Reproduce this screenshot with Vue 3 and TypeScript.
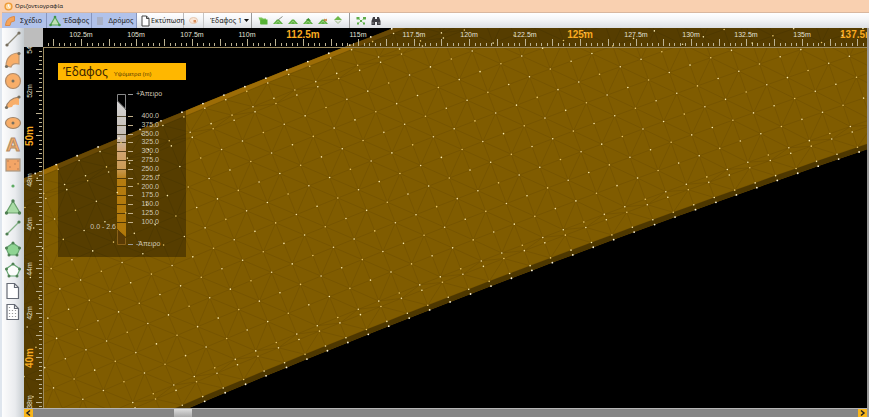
<script setup lang="ts">
import { computed, onBeforeUnmount, onMounted, ref } from 'vue'

interface Point { x: number; y: number }
interface Label { at: number; text: string; big: boolean }

const host = ref<HTMLElement | null>(null)
const width = ref(843)
const height = ref(389)
const RULER = 19
let observer: ResizeObserver | null = null

onMounted(() => {
  const measure = () => {
    if (!host.value) return
    width.value = host.value.clientWidth
    height.value = host.value.clientHeight
  }
  measure()
  observer = new ResizeObserver(measure)
  if (host.value) observer.observe(host.value)
})
onBeforeUnmount(() => observer?.disconnect())

/* Road corridor: stations along the lower edge, cross-section rows on the normal */
const STEP = 20.45
const ROW = 22.1
const WIDTH_ROWS = 12.48
const sections = [0, 0.23, 0.957, 1.22, 2.24, 3.24, 4.24, 5.24, 6.24, 7.24, 8.24, 9.24, 10.24, 11.25, 11.5, 12.25, WIDTH_ROWS]

function place(k: number, row: number): Point {
  const slope = (-8.571 + 0.0488 * k) / STEP
  const len = Math.hypot(1, slope)
  return {
    x: 180.7 + STEP * k + (slope / len) * row * ROW,
    y: 373.3 - 8.571 * k + 0.0244 * k * k - (1 / len) * row * ROW,
  }
}

const stations = computed(() => {
  const last = Math.ceil(width.value / STEP) + 6
  return Array.from({ length: last + 14 }, (_, i) => i - 14)
})

const poly = (pts: Point[]) => pts.map(p => `${p.x.toFixed(1)},${p.y.toFixed(1)}`).join(' ')
const band = (a: number, b: number) =>
  poly([...stations.value.map(k => place(k, a)), ...[...stations.value].reverse().map(k => place(k, b))])

const surface = computed(() => band(0, WIDTH_ROWS))
const lowerSlope = computed(() => band(0, 0.23))
const upperSlope = computed(() => band(12.28, WIDTH_ROWS))

const points = computed(() =>
  stations.value.flatMap(k => sections.map((s, i) => ({
    ...place(k, s),
    edge: i === 0 || i === sections.length - 1,
    tone: Math.abs(k * 7 + i * 5) % 3,
  }))).filter(p => p.x > 0 && p.x < width.value && p.y > 0 && p.y < height.value - 9))

const mesh = computed(() => {
  const parts: string[] = []
  const seg = (a: Point, b: Point) => parts.push(`M${a.x.toFixed(1)} ${a.y.toFixed(1)}L${b.x.toFixed(1)} ${b.y.toFixed(1)}`)
  for (const k of stations.value) {
    seg(place(k, 0), place(k, WIDTH_ROWS))
    sections.forEach((s, i) => {
      seg(place(k, s), place(k + 1, s))
      if (i < sections.length - 1) {
        const up = sections[i + 1]
        if ((i + k) % 3 === 0) seg(place(k, s), place(k + 1, up))
        else seg(place(k, up), place(k + 1, s))
      }
    })
  }
  return parts.join('')
})

/* Rulers */
const PX_PER_M = 22.18
const xTicks = computed(() => {
  const out: string[] = []
  for (let i = -6; ; i++) {
    const x = Math.round(57 + i * PX_PER_M / 4)
    if (x > width.value) break
    if (x > RULER) out.push(`M${x}.5 ${i % 5 === 0 ? 11 : 15}V18`)
  }
  return out.join('')
})
const yTicks = computed(() => {
  const out: string[] = []
  for (let i = -10; ; i++) {
    const y = Math.round(63 + i * PX_PER_M / 5)
    if (y > height.value - 10) break
    if (y > RULER) out.push(`M${i % 5 === 0 ? 12 : 15} ${y}.5H18`)
  }
  return out.join('')
})
const xLabels = computed(() => {
  const out: Label[] = []
  for (let i = 0; 57 + i * PX_PER_M * 2.5 < width.value + 20; i++) {
    const v = 102.5 + i * 2.5
    out.push({ at: Math.round(57 + i * PX_PER_M * 2.5), text: `${v}m`, big: i % 5 === 4 })
  }
  return out
})
const yLabels = computed(() => {
  const out: Label[] = []
  for (let i = 0; 19 + i * PX_PER_M * 2 < height.value; i++) {
    const v = 54 - i * 2
    out.push({ at: Math.round(19 + i * PX_PER_M * 2), text: `${v}m`, big: v % 10 === 0 })
  }
  return out
})

const levels = ['400.0', '375.0', '350.0', '325.0', '300.0', '275.0', '250.0', '225.0', '200.0', '175.0', '150.0', '125.0', '100.0']

const tools = ['Γραμμή', 'Τομέας', 'Κύκλος', 'Τόξο', 'Έλλειψη', 'Κείμενο', 'Εικόνα', 'Σημείο', 'Τρίγωνο', 'Ακμή', 'Πολύγωνο', 'Περίγραμμα', 'Σελίδα', 'Πίνακας']
const terrainTools = ['Άνοιγμα', 'Επεξεργασία', 'Επιφάνεια', 'Πύκνωση', 'Διαγραφή', 'Ισοϋψείς']
</script>

<template>
  <div class="app">
    <header class="titlebar">
      <svg class="logo" viewBox="0 0 9 9"><circle cx="4.5" cy="4.5" r="3.4" fill="#ffd9a0" stroke="#ee9a35" stroke-width="1.4" /><path d="M4.500 2.500V4.500L6 5.500" stroke="#fff" fill="none" /></svg>
      <span>Οριζοντιογραφία</span>
    </header>

    <nav class="toolbar">
      <button class="tab on">
        <svg viewBox="0 0 12 12"><path d="M1.500 10.500C2 5 5 2 10.500 1.500V6L7 7L6 10.500Z" fill="#f5a45a" stroke="#dd8a48" /></svg><span>Σχέδιο</span>
      </button>
      <button class="tab on">
        <svg viewBox="0 0 12 12"><path d="M6 2L10.500 10H1.500Z" fill="#bfe0b5" stroke="#56a558" stroke-width="1.200" /><g fill="#3f9447"><circle cx="6" cy="2" r="1.300" /><circle cx="1.600" cy="10" r="1.300" /><circle cx="10.400" cy="10" r="1.300" /></g></svg><span>Έδαφος</span>
      </button>
      <button class="tab on">
        <svg viewBox="0 0 12 12"><path d="M3 2H9V10H3Z" fill="#a9b1c7" /></svg><span>Δρόμος</span>
      </button>
      <button class="tab print">
        <svg viewBox="0 0 12 12"><path d="M3 1H7.500L10 3.500V11H3Z" fill="#fff" stroke="#444" /><path d="M7.500 1V3.500H10" fill="none" stroke="#444" /></svg><span>Εκτύπωση</span>
      </button>
      <button class="tab small" aria-label="Επιλογή">
        <svg viewBox="0 0 12 12"><ellipse cx="5.500" cy="5.500" rx="4" ry="3" fill="#fae6d6" stroke="#e6c8b0" /><path d="M5.500 5H8V7.500H5.500Z" fill="#d98f5c" /></svg>
      </button>
      <div class="terrain">
        <select aria-label="Έδαφος"><option>Έδαφος 1</option></select>
        <svg viewBox="0 0 5 3"><path d="M0 0H5L2.500 3Z" fill="#111" /></svg>
      </div>
      <div class="group">
        <button v-for="(t, i) in terrainTools" :key="t" class="icon" :aria-label="t">
          <svg viewBox="0 0 12 12">
            <template v-if="i === 0"><path d="M1.500 2.500H5L6 3.500H9V9H3V6Z" fill="#7cc75a" /><path d="M3.500 4.500H10.500V9.500H3.500Z" fill="#55b134" /></template>
            <template v-else-if="i === 5"><path d="M2 5L6 1L10 5Z" fill="#6cb84a" /><path d="M2.500 5.500H9.500L6 8.500Z" fill="#dfe9d6" /><path d="M3 5.500L6 8.500L9 5.500" fill="none" stroke="#9fb98e" /></template>
            <template v-else><path d="M1 9L5 4.500H7L11 9Z" fill="#5cb041" /><path d="M3.500 9L6 6L8.500 9" fill="none" stroke="#93cf78" /></template>
            <path v-if="i === 1" d="M6 5L10.500 1.500" stroke="#8a8f85" />
            <path v-if="i === 3" d="M4 5L6.500 3L9 6Z" fill="#398c2b" />
            <path v-if="i === 4" d="M7 4L10 6M10 4L7 6" stroke="#c87a33" />
          </svg>
        </button>
      </div>
      <div class="group last">
        <button class="icon" aria-label="Σημεία"><svg viewBox="0 0 12 12"><path d="M3 3L6 6L9.500 3M3 8.500L6 6L9 8.500" fill="none" stroke="#a5d795" /><path d="M1.500 2H4.500V4.500H1.500ZM8 2H11V4.500H8ZM5 5H7V7H5ZM2 7.500H4V9.500H2ZM8 7.500H10V9.500H8Z" fill="#5cab48" /></svg></button>
        <button class="icon" aria-label="Εύρεση"><svg viewBox="0 0 12 12"><path d="M3 2H5V4H7V2H9L10.500 6V10H7V7H5V10H1.500V6Z" fill="#3d3d42" /><path d="M3 7V9M9 7V9" stroke="#888" /></svg></button>
      </div>
    </nav>

    <main class="work">
      <aside class="rail">
        <button v-for="(t, i) in tools" :key="t" :aria-label="t">
          <svg viewBox="0 0 20 20" fill="none" stroke-width="1.200">
            <template v-if="i === 0"><path d="M4 16L16 4" stroke="#8e8a7a" /><g fill="#776f60"><circle cx="4" cy="16" r="1.600" /><circle cx="16" cy="4" r="1.600" /></g></template>
            <template v-else-if="i === 1"><path d="M3 16C3 8 8 3 16 3V14C12 13 9 14 8 17Z" fill="#f8ae69" stroke="#bd9570" /><g fill="#776f60"><circle cx="3.500" cy="16.500" r="1.600" /><circle cx="16" cy="3.500" r="1.600" /></g></template>
            <template v-else-if="i === 2"><circle cx="10" cy="10" r="7.500" fill="#f8ae69" stroke="#b08a68" /><circle cx="10" cy="10" r="1.500" fill="#776f60" /></template>
            <template v-else-if="i === 3"><path d="M3 16C4 10 9 6 16 5V13C12 12 10 12 9 15Z" fill="#f8ae69" /><path d="M3 16C4 10 9 6 16 5" stroke="#a28468" /><g fill="#776f60"><circle cx="3.500" cy="15.500" r="1.600" /><circle cx="16" cy="5" r="1.600" /></g></template>
            <template v-else-if="i === 4"><ellipse cx="10" cy="10" rx="7.500" ry="5.500" fill="#f8ae69" stroke="#a08468" /><circle cx="10" cy="10" r="1.500" fill="#776f60" /></template>
            <text v-else-if="i === 5" class="letter" x="10" y="17" text-anchor="middle">A</text>
            <template v-else-if="i === 6"><rect x="3" y="4" width="14" height="12" fill="#f3a566" stroke="#a99681" /><g fill="#cf8d5b"><circle cx="5" cy="6" r="1" /><circle cx="15" cy="6" r="1" /><circle cx="7" cy="12" r="1" /><circle cx="12" cy="9" r="1" /><circle cx="15" cy="14" r="1" /></g></template>
            <circle v-else-if="i === 7" cx="10" cy="10" r="1.600" fill="#5dab63" />
            <template v-else-if="i === 8"><path d="M10 4L17 16H3Z" fill="#a9dba5" stroke="#6aa06b" /><g fill="#4f8053"><circle cx="10" cy="4" r="1.700" /><circle cx="3.500" cy="16" r="1.700" /><circle cx="16.500" cy="16" r="1.700" /></g></template>
            <template v-else-if="i === 9"><path d="M4 16L16 4" stroke="#84b287" /><g fill="#4f8053"><circle cx="4" cy="16" r="1.600" /><circle cx="16" cy="4" r="1.600" /></g></template>
            <template v-else-if="i < 12"><path d="M10 4L17 9L14 16H6L3 9Z" :fill="i === 10 ? '#8fd493' : '#fbfcfb'" stroke="#67a672" /><g fill="#4f8053"><circle cx="10" cy="4" r="1.500" /><circle cx="16.500" cy="9" r="1.500" /><circle cx="14" cy="16" r="1.500" /><circle cx="6" cy="16" r="1.500" /><circle cx="3.500" cy="9" r="1.500" /></g></template>
            <template v-else><path d="M4 2.500H11.500L15.500 6.500V17.500H4Z" fill="#fff" stroke="#666b75" /><path d="M11.500 2.500V6.500H15.500" stroke="#666b75" /><path v-if="i === 13" d="M6.500 5V16M9.500 8V16M12.500 8V16" stroke="#999" stroke-dasharray="1 2" /></template>
          </svg>
        </button>
      </aside>

      <section ref="host" class="plan">
        <svg class="layer">
          <polygon :points="surface" fill="#805c00" />
          <path :d="mesh" class="mesh" />
          <polygon :points="upperSlope" fill="#9c6c06" />
          <polygon :points="lowerSlope" fill="#4d3700" />
          <rect x="19" y="0" width="100%" height="19" class="shade" />
          <rect x="0" y="19" width="19" height="100%" class="shade" />
          <path :d="xTicks + yTicks" class="ticks" />
          <path d="M19 19.500H4000M19.500 19V4000" class="axis" />
          <text v-for="l in xLabels" :key="l.text" :x="l.at" :y="l.big ? 10 : 9" :class="['mark', { big: l.big }]">{{ l.text }}</text>
          <text v-for="l in yLabels" :key="'y' + l.text" :transform="`translate(${l.big ? 9 : 8} ${l.at}) rotate(-90)`" :class="['mark', { big: l.big }]">{{ l.text }}</text>
          <rect width="19" height="19" fill="#bdbdbd" />
        </svg>

        <div class="legend">
          <h2><b>Έδαφος</b><small>Υψόμετρα (m)</small></h2>
          <div class="scale">
            <span class="range">0.0 - 2.6</span>
            <svg class="bar" viewBox="0 0 20 152">
              <defs>
                <linearGradient id="relief" x1="0" y1="0" x2="0" y2="1">
                  <stop offset="0" stop-color="#d4d4d4" /><stop offset=".25" stop-color="#c4bcb4" /><stop offset=".36" stop-color="#d2a574" /><stop offset=".5" stop-color="#c99a55" /><stop offset=".58" stop-color="#b57c10" /><stop offset="1" stop-color="#b0780a" />
                </linearGradient>
              </defs>
              <path d="M.5 1.500H8.500V16L.5 8Z" fill="#000" stroke="#888" />
              <path d="M0 8L9 17V144L0 136Z" fill="url(#relief)" />
              <path d="M0 136L9 145V151H0Z" fill="#5a3b05" /><path d="M.5 137V151.500H8.500V145" fill="none" stroke="#8a6118" />
              <path v-for="(l, i) in levels" :key="l" :d="`M0 ${Math.round(23 + i * 8.8)}.500H9`" stroke="#2e2203" stroke-opacity=".75" />
              <path v-for="(l, i) in levels" :key="'t' + l" :d="`M11 ${Math.round(23 + i * 8.8)}.500H16`" stroke="#c2b08b" />
              <path d="M11 1.500H16M11 151.500H16" stroke="#999" />
            </svg>
            <div class="values">
              <span class="inf">+Άπειρο</span>
              <ol><li v-for="l in levels" :key="l">{{ l }}</li></ol>
              <span class="inf">-Άπειρο</span>
            </div>
          </div>
        </div>

        <svg class="layer dots">
          <circle v-for="(p, i) in points" :key="i" :cx="p.x" :cy="p.y" :r="p.edge ? 0.9 : 0.8" :class="p.edge ? 'edge' : 'tone' + p.tone" />
        </svg>

        <div class="scroll">
          <button aria-label="Αριστερά"><svg viewBox="0 0 9 8"><path d="M6 1.500L3 4L6 6.500" /></svg></button>
          <div class="track"><button class="thumb" aria-label="Κύλιση"></button></div>
          <button aria-label="Δεξιά"><svg viewBox="0 0 9 8"><path d="M3 1.500L6 4L3 6.500" /></svg></button>
        </div>
      </section>
    </main>
  </div>
</template>

<style>
body { margin: 0; overflow: hidden; }
</style>

<style scoped>
.app {
  display: flex;
  flex-direction: column;
  height: 100vh;
  background: #f8cfb0;
  font-family: "Noto Sans", "DejaVu Sans", sans-serif;
  font-size: 7px;
  color: #222;
}
button {
  display: flex;
  align-items: center;
  padding: 0;
  border: 0;
  background: none;
  font: inherit;
  color: inherit;
}
.titlebar {
  display: flex;
  align-items: center;
  gap: 2px;
  height: 12px;
  padding-left: 4px;
  font-size: 6px;
  background: #f9d0b0;
}
.logo { width: 9px; height: 9px; }
.toolbar {
  display: flex;
  height: 16px;
  margin-left: 2px;
  background: linear-gradient(#fff, #f5f6f8 40%, #dcdfe3);
  box-sizing: border-box;
  border-top: 1px solid #d9b79f;
}
.tab {
  width: 45px;
  padding-left: 2px;
  box-sizing: border-box;
  border-right: 1px solid #8796bf;
  font-size: 7px;
  white-space: nowrap;
}
.tab svg { width: 12px; height: 12px; flex: none; }
.tab span { flex: 1; text-align: center; }
.tab.on { background: #b1c2ea; }
.tab.print { width: 47px; border-color: #bbb; }
.tab.small { width: 20px; padding-left: 4px; border-color: #c5c5c5; }
.terrain {
  display: flex;
  align-items: center;
  width: 48px;
  padding-left: 6px;
  box-sizing: border-box;
  border-right: 1px solid #999;
}
.terrain select {
  width: 34px;
  padding: 0;
  border: 0;
  appearance: none;
  background: none;
  font: inherit;
  font-size: 7px;
  color: #222;
}
.terrain svg { width: 5px; height: 3px; }
.group {
  display: flex;
  align-items: center;
  gap: 3px;
  padding: 0 5px;
  border-right: 1px solid #999;
}
.group.last { border: 0; }
.icon svg { width: 12px; height: 12px; }
.work { display: flex; flex: 1; min-height: 0; padding: 0 2px; background: linear-gradient(90deg, #dfe6ee 50%, #999 50%); }
.rail {
  width: 22px;
  flex: none;
  background: linear-gradient(90deg, #fdfdfd, #e9ebee 60%, #c5cbcf);
}
.rail button { width: 21px; height: 21px; justify-content: center; }
.rail svg { width: 20px; height: 20px; }
.letter {
  font: bold 19px "Liberation Sans", sans-serif;
  fill: #f8ae69;
  stroke: #b08a68;
  stroke-width: 1px;
}
.plan {
  position: relative;
  display: flex;
  flex-direction: column;
  justify-content: flex-end;
  flex: 1;
  min-width: 0;
  overflow: hidden;
  background: #000;
}
.layer { position: absolute; inset: 0; width: 100%; height: 100%; }
.dots { z-index: 1; pointer-events: none; }
.mesh { fill: none; stroke: #513900; stroke-opacity: .2; stroke-width: 1px; }
.shade { fill: #000; fill-opacity: .33; }
.ticks { stroke: #bdb394; stroke-width: 1px; }
.axis { stroke: #9c8b60; stroke-width: 1px; }
.mark {
  font: 7px "Liberation Sans", sans-serif;
  fill: #e4e0d6;
  text-anchor: middle;
}
.mark.big { font-size: 10px; font-weight: bold; fill: #f8aa20; }
.edge { fill: #fff7dc; }
.tone0 { fill: #fff0ae; }
.tone1 { fill: #ecc968; }
.tone2 { fill: #f7e3a2; }
.legend {
  position: absolute;
  left: 34px;
  top: 35px;
  width: 128px;
  height: 194px;
  background: rgb(0 0 0 / 33%);
  font-family: "Liberation Sans", sans-serif;
}
.legend h2 {
  position: relative;
  z-index: 2;
  display: flex;
  align-items: baseline;
  gap: 6px;
  height: 17px;
  margin: 0;
  padding-left: 5px;
  background: #ffb700;
  color: #3a2500;
  line-height: 17px;
}
.legend b { font: 12px/18px "Noto Sans", "DejaVu Sans", sans-serif; }
.legend small { font-size: 6px; font-weight: normal; color: #5a3a00; }
.scale {
  display: grid;
  grid-template-columns: 58px 20px 21px;
  column-gap: 1px;
  padding-top: 13px;
  color: #cfc7b4;
}
.range { align-self: end; padding-bottom: 17px; text-align: right; line-height: 8px; }
.bar { width: 20px; height: 152px; }
.values { display: flex; flex-direction: column; justify-content: space-between; height: 158px; margin-top: -3px; }
.inf { margin-left: -2px; line-height: 8px; white-space: nowrap; }
.values ol {
  display: flex;
  flex-direction: column;
  justify-content: space-between;
  height: 114px;
  margin: 14px 0 auto;
  padding: 0;
  list-style: none;
  text-align: right;
  line-height: 8px;
}
.scroll {
  position: relative;
  z-index: 3;
  display: flex;
  height: 8px;
  background: #858585;
  border-top: 1px solid #b5b5b5;
}
.plan .scroll > button { width: 9px; background: #f9b61b; }
.scroll svg { width: 9px; height: 8px; fill: none; stroke: #222; stroke-width: 1.500px; }
.track { flex: 1; display: flex; padding-left: 17%; }
.track .thumb { width: 18px; margin-left: -2px; background: linear-gradient(#ddd, #aaa); }
</style>
